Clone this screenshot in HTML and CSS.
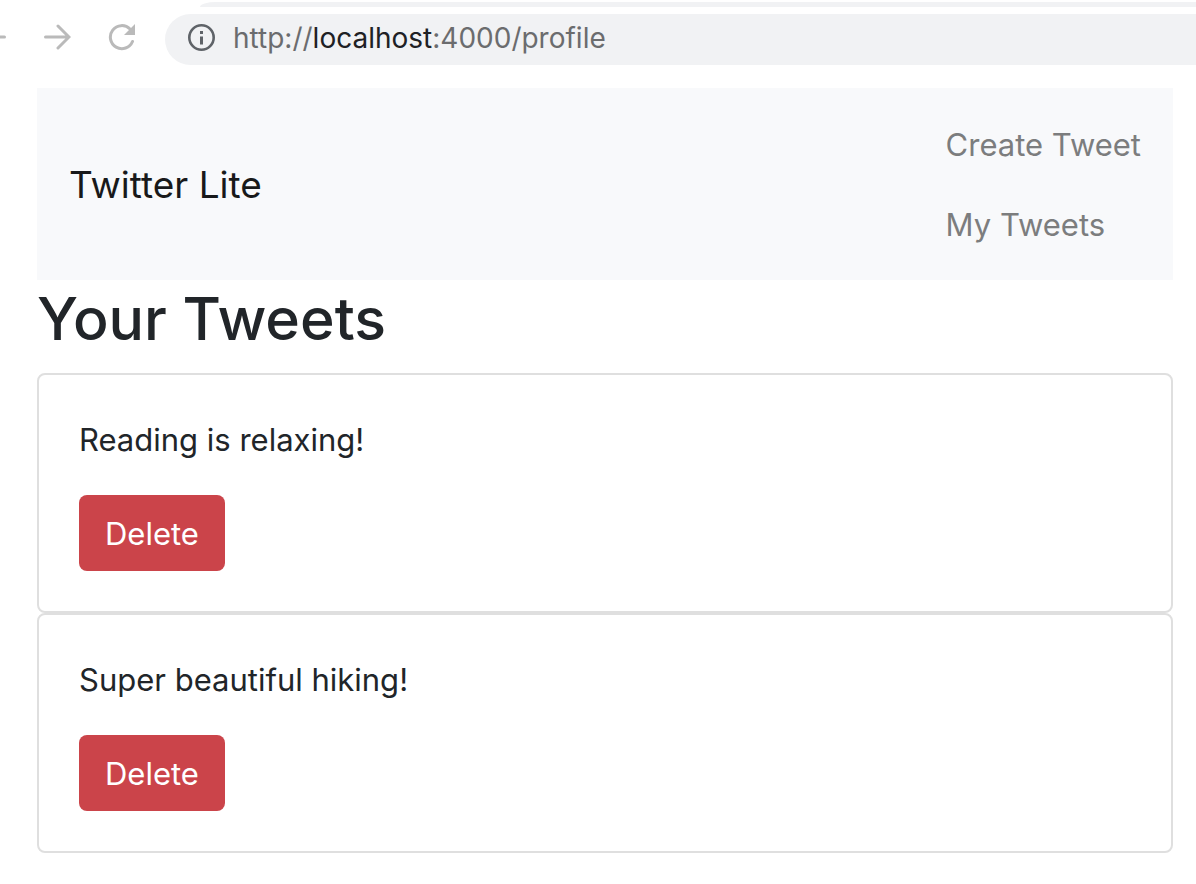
FILE: index.html
```html
<!DOCTYPE html>
<html lang="en">
<head>
<meta charset="utf-8">
<meta name="viewport" content="width=device-width, initial-scale=1">
<title>Twitter Lite</title>
<link rel="stylesheet" href="styles.css">
</head>
<body>
<header class="browser">
  <div class="strip"></div>
  <div class="toolbar">
    <div class="controls">
      <button class="tool" type="button" aria-label="Back"><svg width="6" height="28" viewBox="0 0 6 28"><path d="M0 14h4.500" stroke="#bababa" stroke-width="3" stroke-linecap="round"/></svg></button>
      <button class="tool" type="button" aria-label="Forward"><svg width="28" height="28" viewBox="0 0 28 28" fill="none" stroke="#bababa" stroke-width="3" stroke-linecap="round"><path d="M2.500 14h23M15 3L26 14L15 25"/></svg></button>
      <button class="tool" type="button" aria-label="Reload"><svg width="28" height="28" viewBox="0 0 28 28"><path d="M24.500 18.500A11.500 11.500 0 1 1 22 6" fill="none" stroke="#bababa" stroke-width="3" stroke-linecap="round"/><path d="M27 1v11H16z" fill="#bababa"/></svg></button>
    </div>
    <div class="address">
      <svg width="28" height="28" viewBox="0 0 28 28"><circle cx="14.500" cy="13.500" r="12.200" fill="none" stroke="#5f6368" stroke-width="2.600"/><path d="M14.500 12.500v8M14.500 7v3" stroke="#5f6368" stroke-width="3"/></svg>
      <span class="url">http://<span class="host">localhost</span>:4000/profile</span>
    </div>
  </div>
</header>
<div class="container">
  <nav class="navbar">
    <a class="brand" href="#">Twitter Lite</a>
    <div class="links">
      <a class="link" href="#">Create Tweet</a>
      <a class="link" href="#">My Tweets</a>
    </div>
  </nav>
  <main>
    <h1 class="title">Your Tweets</h1>
    <article class="card">
      <p class="text">Reading is relaxing!</p>
      <button class="delete" type="button">Delete</button>
    </article>
    <article class="card">
      <p class="text">Super beautiful hiking!</p>
      <button class="delete" type="button">Delete</button>
    </article>
  </main>
</div>
</body>
</html>
```
FILE: styles.css
```css
* { box-sizing: border-box; }
body { margin: 0; background: #fff; color: #212529; font-family: Inter, sans-serif; font-size: 31px; line-height: 48px; }
.browser { padding: 2px 0 23px; }
.strip { height: 5px; margin-left: 200px; background: #f1f2f4; border-top-left-radius: 16px 5px; }
.toolbar { display: flex; align-items: center; padding-top: 7px; }
.controls { display: flex; align-items: center; gap: 37px; padding: 0 29px 6px 0; }
.tool { display: flex; padding: 0; border: 0; background: none; }
.address { flex: 1; display: flex; align-items: center; gap: 18px; height: 51px; padding: 0 0 4px 22px; background: #f1f2f4; border-radius: 26px 0 0 26px; }
.url { color: #6b6c6e; font-size: 28px; line-height: 32px; }
.host { color: #202124; }
.container { padding: 0 23px 0 37px; }
.navbar { display: flex; align-items: center; justify-content: space-between; padding: 17px 32px 15px; background: #f8f9fb; }
.brand { color: #18191a; font-size: 37px; text-decoration: none; }
.links { display: flex; flex-direction: column; }
.link { padding: 16px 0; color: #7c7d7e; text-decoration: none; }
.title { margin: 0; padding: 1px 0 16px; font-size: 59px; font-weight: 500; line-height: 76px; }
.card { padding: 41px 40px 40px; border: 2px solid #dfdfdf; border-radius: 8px; }
.text { margin: 0 0 31px; }
.delete { display: block; padding: 15px 26px 13px; border: 0; border-radius: 8px; background: #cb444a; color: #fff; font: inherit; }
```
